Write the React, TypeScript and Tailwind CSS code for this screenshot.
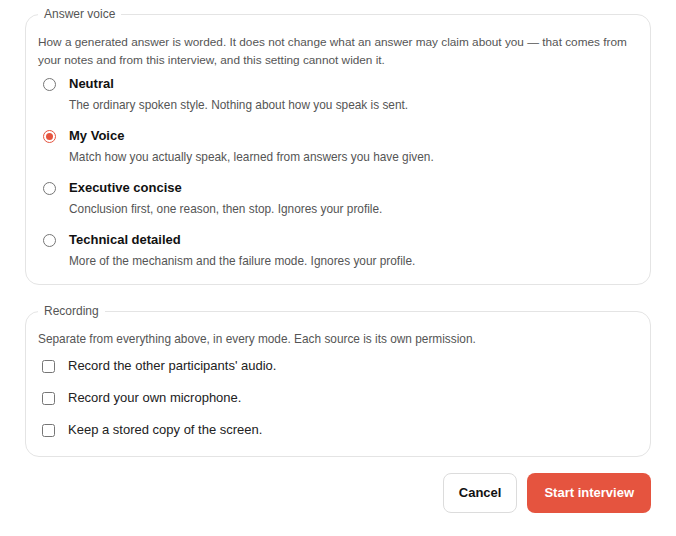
import { useState } from "react";

const VOICES = [
  { id: "neutral", title: "Neutral", desc: "The ordinary spoken style. Nothing about how you speak is sent." },
  { id: "mine", title: "My Voice", desc: "Match how you actually speak, learned from answers you have given." },
  { id: "exec", title: "Executive concise", desc: "Conclusion first, one reason, then stop. Ignores your profile." },
  { id: "tech", title: "Technical detailed", desc: "More of the mechanism and the failure mode. Ignores your profile." },
];

const SOURCES = [
  { id: "others", label: "Record the other participants' audio." },
  { id: "mic", label: "Record your own microphone." },
  { id: "screen", label: "Keep a stored copy of the screen." },
];

export default function App() {
  const [voice, setVoice] = useState("mine");
  const [rec, setRec] = useState<Record<string, boolean>>({});

  return (
    <div className="min-h-screen bg-white pt-[5px] pl-[25px] pr-[25px] font-['Liberation_Sans',Arial,sans-serif] text-[#111]">
      <fieldset className="rounded-[14px] border border-[#e4e4e4] px-3 pb-[14px]">
        <legend className="px-1.5 text-[12px] leading-[18px] text-[#555]">Answer voice</legend>
        <p className="mt-[10px] text-[11.8px] leading-[18px] text-[#555]">
          How a generated answer is worded. It does not change what an answer may claim about you — that comes from
          your notes and from this interview, and this setting cannot widen it.
        </p>
        <div className="mt-[5px] flex flex-col gap-3">
          {VOICES.map((v) => (
            <label key={v.id} className="flex cursor-pointer flex-col">
              <div className="flex items-center">
                <input
                  type="radio"
                  name="voice"
                  className="sr-only"
                  checked={voice === v.id}
                  onChange={() => setVoice(v.id)}
                />
                <span
                  className={`ml-[5px] grid h-[13px] w-[13px] shrink-0 place-items-center rounded-full border ${
                    voice === v.id ? "border-[#e5543f]" : "border-[#767676]"
                  }`}
                >
                  {voice === v.id && <span className="h-[7px] w-[7px] rounded-full bg-[#e5543f]" />}
                </span>
                <span className="ml-[13px] text-[13px] font-bold leading-5 text-[#111]">{v.title}</span>
              </div>
              <span className="mt-0.5 pl-[31px] text-[11.85px] leading-[18px] text-[#555]">{v.desc}</span>
            </label>
          ))}
        </div>
      </fieldset>

      <fieldset className="mt-[17px] rounded-[14px] border border-[#e4e4e4] px-3 pb-4">
        <legend className="px-1.5 text-[12px] leading-[18px] text-[#555]">Recording</legend>
        <p className="mt-[10px] text-[11.85px] leading-[18px] text-[#555]">
          Separate from everything above, in every mode. Each source is its own permission.
        </p>
        <div className="mt-[8px] flex flex-col gap-3">
          {SOURCES.map((s) => (
            <label key={s.id} className="flex cursor-pointer items-center">
              <input
                type="checkbox"
                className="ml-[4px] h-[13px] w-[13px] shrink-0 accent-[#e5543f]"
                checked={!!rec[s.id]}
                onChange={(e) => setRec({ ...rec, [s.id]: e.target.checked })}
              />
              <span className="ml-[13px] text-[13px] leading-5 text-[#222]">{s.label}</span>
            </label>
          ))}
        </div>
      </fieldset>

      <div className="mt-4 flex justify-end gap-[10px]">
        <button className="h-10 rounded-lg border border-[#dcdcdc] bg-white px-[15px] text-[13px] font-bold text-[#111]">
          Cancel
        </button>
        <button className="h-10 rounded-lg bg-[#e5543f] px-[17px] text-[13px] font-bold text-white">
          Start interview
        </button>
      </div>
    </div>
  );
}
